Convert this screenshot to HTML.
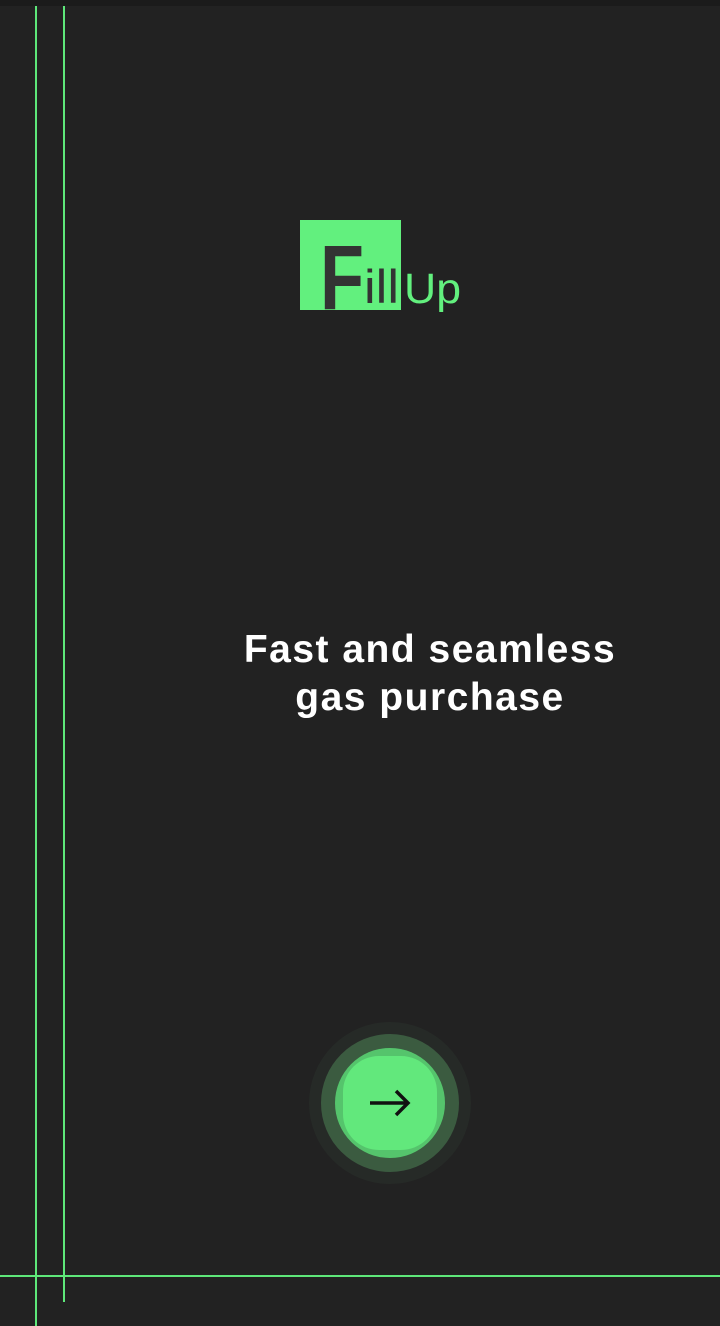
<!DOCTYPE html>
<html><head><style>
body{margin:0;width:720px;height:1326px;background:#222222;position:relative;overflow:hidden;font-family:"Liberation Sans",sans-serif}
.top{position:absolute;left:0;top:0;width:720px;height:6px;background:#1b1b1b}
.v{position:absolute;width:2px;background:#5ee87a}
h1{position:absolute;left:180px;width:500px;top:626px;margin:0;text-align:center;color:#fff;font-size:39px;line-height:48px;font-weight:bold;letter-spacing:1.5px}
</style></head><body>
<div class="top"></div>
<div class="v" style="left:35px;top:6px;height:1320px"></div>
<div class="v" style="left:63px;top:6px;height:1296px"></div>
<div style="position:absolute;left:0;top:1275px;width:720px;height:2px;background:#5ee87a"></div>
<svg style="position:absolute;left:0;top:0" width="720" height="1326">
<rect x="300" y="220" width="101" height="90" fill="#62f07e"/>
<text x="320" y="309" font-family="Liberation Sans" font-weight="bold" font-size="92" fill="#333" textLength="44" lengthAdjust="spacingAndGlyphs">F</text>
<text x="364" y="303" font-family="Liberation Sans" font-size="47" fill="#333" textLength="35" lengthAdjust="spacingAndGlyphs">ill</text>
<text x="404" y="303" font-family="Liberation Sans" font-size="43" fill="#62f07e" textLength="57" lengthAdjust="spacingAndGlyphs">Up</text>
<circle cx="390" cy="1103" r="81" fill="#262a27"/>
<circle cx="390" cy="1103" r="69" fill="#3b5b40"/>
<circle cx="390" cy="1103" r="55" fill="#55c46c"/>
<rect x="343" y="1056" width="94" height="94" rx="36" fill="#62e87c"/>
<path d="M370 1103H408M396 1091L408 1103L396 1115" stroke="#111" stroke-width="3.5" fill="none"/>
</svg>
<h1>Fast and seamless<br>gas purchase</h1>
</body></html>
